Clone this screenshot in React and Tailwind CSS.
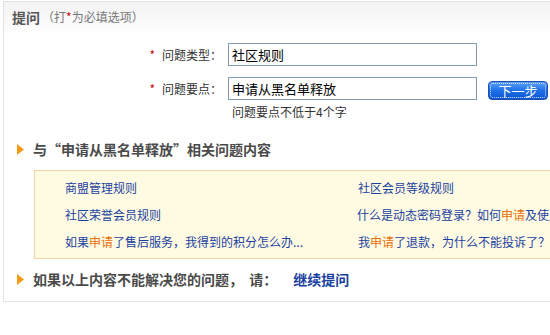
export default function App() {
  const font = { fontFamily: '"Noto Sans CJK SC", "Liberation Sans", sans-serif' };
  const Hl = ({ children }) => <span className="text-[#e8700a]">{children}</span>;
  const Bullet = () => (
    <svg width="7" height="11" viewBox="0 0 7 11" className="shrink-0">
      <path d="M0 0 L7 5.5 L0 11 Z" fill="#f39c12" />
    </svg>
  );
  return (
    <div className="w-[550px] h-[335px] overflow-hidden bg-white" style={font}>
      <div className="ml-[3px] mt-[1px] w-[620px] border border-[#e2e2e2]">
        <div className="h-[30px] flex items-center pl-[8px] bg-gradient-to-b from-[#f3f3f3] to-[#fdfdfd]">
          <span className="text-[14px] font-bold text-[#555]">提问</span>
          <span className="text-[12px] text-[#777] ml-[2px]">（打<span className="text-[#d40000]">*</span>为必填选项）</span>
        </div>
        <div className="pt-[11px]">
          <div className="flex items-center">
            <div className="w-[224px] flex justify-end items-center pr-[6px] text-[12px] text-[#333]">
              <span className="text-[#cc0000] mr-[7px]">*</span>
              <span>问题类型：</span>
            </div>
            <div className="w-[249px] h-[23px] border border-[#7f9db9] flex items-center px-[3px] text-[13px] text-black">社区规则</div>
          </div>
          <div className="flex items-end mt-[11px]">
            <div className="w-[224px] h-[23px] flex justify-end items-center pr-[6px] text-[12px] text-[#333]">
              <span className="text-[#cc0000] mr-[7px]">*</span>
              <span>问题要点：</span>
            </div>
            <div className="w-[249px] h-[23px] border border-[#7f9db9] flex items-center px-[3px] text-[13px] text-black">申请从黑名单释放</div>
            <div className="ml-[11px] w-[60px] h-[19px] rounded-[4px] border border-[#1d4fb0] bg-gradient-to-b from-[#5aa0f7] via-[#1f6fe8] to-[#0d55d0] p-[1px]">
              <div className="w-full h-full rounded-[3px] border border-dotted border-[#cfe0ff] flex items-center justify-center text-[13px] text-white leading-none">下一步</div>
            </div>
          </div>
          <div className="ml-[228px] mt-[4px] text-[12px] leading-[16px] text-[#333]">问题要点不低于4个字</div>
        </div>
        <div className="mt-[19px] flex items-center h-[20px] pl-[13px]">
          <Bullet />
          <span className="ml-[9px] text-[14px] font-bold text-[#4a4a4a]">与“申请从黑名单释放”相关问题内容</span>
        </div>
        <div className="mt-[11px] ml-[30px] border border-[#f5d3a6] bg-[#fffbe3] pt-[3px] pb-[3px] pl-[30px] text-[12px] text-[#1b3f9f]">
          <div className="flex h-[27px] items-center">
            <div className="w-[293px]">商盟管理规则</div>
            <div className="whitespace-nowrap">社区会员等级规则</div>
          </div>
          <div className="flex h-[27px] items-center">
            <div className="w-[293px]">社区荣誉会员规则</div>
            <div className="whitespace-nowrap">什么是动态密码登录？如何<Hl>申请</Hl>及使用动态密码？</div>
          </div>
          <div className="flex h-[27px] items-center">
            <div className="w-[293px] whitespace-nowrap">如果<Hl>申请</Hl>了售后服务，我得到的积分怎么办...</div>
            <div className="whitespace-nowrap">我<Hl>申请</Hl>了退款，为什么不能投诉了？</div>
          </div>
        </div>
        <div className="mt-[10px] mb-[12px] flex items-center h-[20px] pl-[13px]">
          <Bullet />
          <span className="ml-[9px] text-[14px] font-bold text-[#4a4a4a] whitespace-pre">如果以上内容不能解决您的问题，  请：</span>
          <span className="ml-[16px] text-[14px] font-bold text-[#1b3f9f]">继续提问</span>
        </div>
      </div>
    </div>
  );
}
